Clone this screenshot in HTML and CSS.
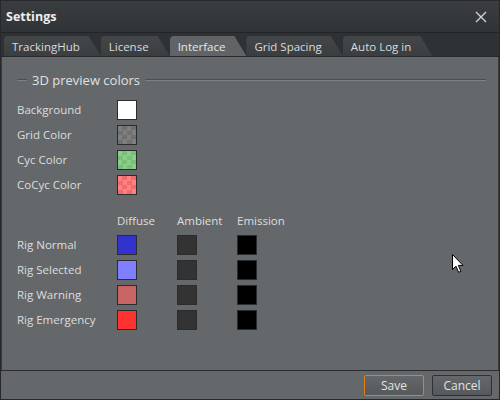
FILE: index.html
```html
<!DOCTYPE html>
<html>
<head>
<meta charset="utf-8">
<link rel="stylesheet" href="styles.css">
</head>
<body>
<div class="window">
  <div class="titlebar">
    <span class="title">Settings</span>
    <svg class="close" width="12" height="12" viewBox="0 0 12 12"><path d="M1 1 L11 11 M11 1 L1 11" stroke="#d0d2d4" stroke-width="1.4" fill="none"/></svg>
  </div>
  <div class="tabstrip">
    <div class="tab">TrackingHub</div>
    <div class="tab">License</div>
    <div class="tab active">Interface</div>
    <div class="tab">Grid Spacing</div>
    <div class="tab">Auto Log in</div>
  </div>
  <div class="panel">
    <div class="group-title"><span class="line short"></span><span class="gt-text">3D preview colors</span><span class="line long"></span></div>
    <div class="rows">
      <div class="row"><span class="label">Background</span><span class="sw white"></span></div>
      <div class="row"><span class="label">Grid Color</span><span class="sw check-grey"></span></div>
      <div class="row"><span class="label">Cyc Color</span><span class="sw check-green"></span></div>
      <div class="row"><span class="label">CoCyc Color</span><span class="sw check-red"></span></div>
    </div>
    <div class="rig">
      <div class="row head"><span class="label"></span><span class="col">Diffuse</span><span class="col">Ambient</span><span class="col">Emission</span></div>
      <div class="row"><span class="label">Rig Normal</span><span class="col"><span class="sw blue"></span></span><span class="col"><span class="sw amb"></span></span><span class="col"><span class="sw black"></span></span></div>
      <div class="row"><span class="label">Rig Selected</span><span class="col"><span class="sw lblue"></span></span><span class="col"><span class="sw amb"></span></span><span class="col"><span class="sw black"></span></span></div>
      <div class="row"><span class="label">Rig Warning</span><span class="col"><span class="sw rose"></span></span><span class="col"><span class="sw amb"></span></span><span class="col"><span class="sw black"></span></span></div>
      <div class="row"><span class="label">Rig Emergency</span><span class="col"><span class="sw red"></span></span><span class="col"><span class="sw amb"></span></span><span class="col"><span class="sw black"></span></span></div>
    </div>
    <svg class="cursor" width="13" height="20" viewBox="0 0 13 20"><path d="M0.5 0.5 L0.5 15.5 L4 12.2 L6.6 18.3 L8.9 17.3 L6.4 11.4 L11 11.4 Z" fill="#fff" stroke="#000" stroke-width="1"/></svg>
  </div>
  <div class="footer">
    <button class="btn primary">Save</button>
    <button class="btn">Cancel</button>
  </div>
</div>
</body>
</html>
```
FILE: styles.css
```css
html, body {
  margin: 0;
  padding: 0;
  background: #2c2f32;
}
body {
  font-family: "Open Sans", "Noto Sans", sans-serif;
  font-size: 11.5px;
  color: #dcdedf;
}
.window {
  width: 500px;
  height: 400px;
  box-sizing: border-box;
  border: 1px solid #26282b;
  display: flex;
  flex-direction: column;
  background: #65686b;
}
.titlebar {
  height: 31px;
  flex: none;
  display: flex;
  align-items: center;
  justify-content: space-between;
  padding: 0 12px 0 5px;
  background: linear-gradient(#3a3d40, #313437);
  border-bottom: 1px solid #222427;
}
.title {
  font-weight: bold;
  font-size: 12.5px;
  color: #eeeeee;
}
.close {
  display: block;
}
.tabstrip {
  height: 23px;
  flex: none;
  display: flex;
  align-items: flex-end;
  gap: 1px;
  padding: 0 0 0 3px;
  background: #2f3235;
  border-bottom: 1px solid #26282b;
}
.tab {
  height: 20px;
  display: flex;
  align-items: center;
  padding: 0 21px 0 8px;
  background: linear-gradient(#44474a, #3b3e41);
  color: #dadcdd;
  border-radius: 4px 6px 0 0;
  clip-path: polygon(0 0, calc(100% - 12px) 0, 100% 100%, 0 100%);
  margin-right: -1px;
}
.tab.active {
  background: #606467;
  color: #e8e8e8;
}
.panel {
  flex: 1;
  position: relative;
  padding: 12px 12px 0 15px;
  border-left: 1px solid #3a3d40;
  border-right: 1px solid #3a3d40;
}
.group-title {
  display: flex;
  align-items: center;
  gap: 5px;
  height: 22px;
  font-size: 13px;
  color: #dfe1e2;
}
.line {
  height: 0;
  border-top: 1px solid #4c4f52;
  border-bottom: 1px solid #7e8184;
}
.line.short { width: 10px; }
.line.long { flex: 1; margin-right: 0; }
.rows {
  margin-top: 6px;
}
.row {
  display: flex;
  align-items: center;
  height: 25px;
}
.label {
  width: 100px;
  flex: none;
}
.rig {
  margin-top: 11px;
}
.rig .row.head {
  height: 24px;
}
.col {
  width: 60px;
  flex: none;
  display: flex;
}
.sw {
  display: block;
  width: 18px;
  height: 18px;
  border: 1px solid #2a2c2e;
}
.white { background: #ffffff; }
.check-grey {
  background: repeating-conic-gradient(#6f6f6f 0 25%, #7f7f7f 0 50%) 0 0 / 9px 9px;
}
.check-green {
  background: repeating-conic-gradient(#78c078 0 25%, #8ace8a 0 50%) 0 0 / 9px 9px;
}
.check-red {
  background: repeating-conic-gradient(#f06c6c 0 25%, #ff8282 0 50%) 0 0 / 9px 9px;
}
.blue { background: #3232cc; }
.lblue { background: #8080ff; }
.rose { background: #c86464; }
.red { background: #ff3232; }
.amb { background: #333333; }
.black { background: #000000; }
.cursor {
  position: absolute;
  left: 450px;
  top: 197px;
}
.footer {
  height: 28px;
  flex: none;
  display: flex;
  justify-content: flex-end;
  align-items: center;
  gap: 8px;
  padding: 0 7px 0 0;
  border-top: 1px solid #2a2c2f;
}
.btn {
  width: 60px;
  height: 21px;
  box-sizing: border-box;
  font-family: "Open Sans", "Noto Sans", sans-serif;
  font-size: 12px;
  color: #e2e2e2;
  background: linear-gradient(#64686b, #55595c);
  border: 1px solid #2e3134;
  border-radius: 2px;
  padding: 0;
}
.btn.primary {
  border-color: #e57e10;
}
```
